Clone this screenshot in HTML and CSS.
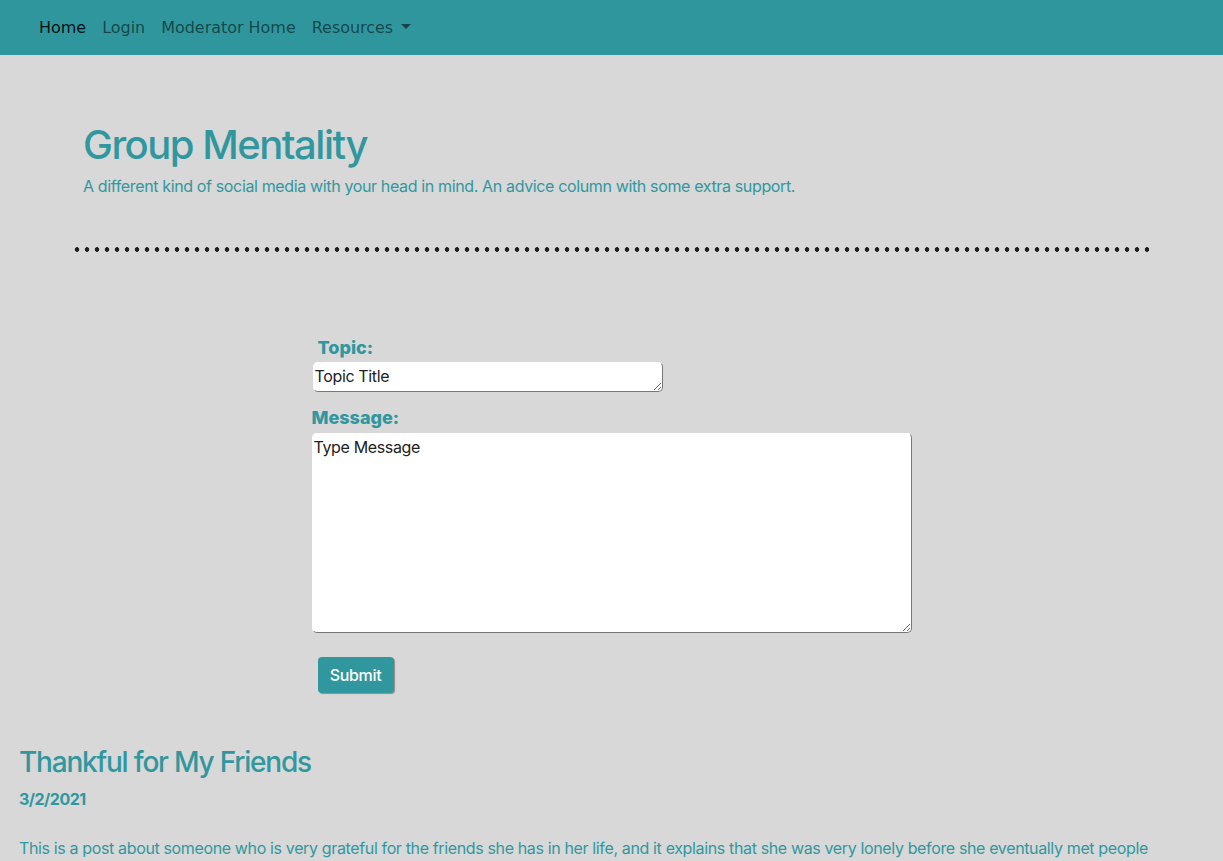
FILE: index.html
```html
<!DOCTYPE html>
<html>
<head>
<meta charset="utf-8">
<title>Group Mentality</title>
<link rel="stylesheet" href="styles.css">
</head>
<body>
<nav class="navbar">
  <a class="nav-link active" href="#">Home</a>
  <a class="nav-link" href="#">Login</a>
  <a class="nav-link" href="#">Moderator Home</a>
  <a class="nav-link dropdown" href="#">Resources <span class="caret"></span></a>
</nav>
<header class="jumbo">
  <h1 class="title">Group Mentality</h1>
  <p class="lead">A different kind of social media with your head in mind. An advice column with some extra support.</p>
</header>
<div class="dots"></div>
<form class="post-form">
  <label class="lbl lbl-topic">Topic:</label>
  <textarea class="topic">Topic Title</textarea>
  <label class="lbl lbl-msg">Message:</label>
  <textarea class="message">Type Message</textarea>
  <button type="button" class="submit">Submit</button>
</form>
<section class="post">
  <h3 class="post-title">Thankful for My Friends</h3>
  <h6 class="post-date">3/2/2021</h6>
  <p class="post-body">This is a post about someone who is very grateful for the friends she has in her life, and it explains that she was very lonely before she eventually met people</p>
</section>
</body>
</html>
```
FILE: styles.css
```css
* { box-sizing: border-box; }
html, body { margin: 0; padding: 0; }
body {
  background: #d8d8d8;
  font-family: Inter, "Liberation Sans", Arial, sans-serif;
  color: #31979e;
  font-size: 16px;
  line-height: 1.5;
  letter-spacing: -0.36px;
  overflow: hidden;
  height: 861px;
}
.navbar {
  background: #2f969d;
  height: 55px;
  display: flex;
  align-items: center;
  padding: 0 23px 0 31px;
  letter-spacing: 0;
}
.nav-link {
  font-family: "DejaVu Sans", Verdana, sans-serif;
  font-size: 16px;
  color: rgba(0, 0, 0, 0.55);
  text-decoration: none;
  padding: 8px 8px;
  line-height: 24px;
  display: flex;
  align-items: center;
  letter-spacing: -0.03px;
}
.nav-link.active { color: rgba(0, 0, 0, 0.9); }
.caret {
  display: inline-block;
  margin-left: 8px;
  width: 0; height: 0;
  border-left: 5px solid transparent;
  border-right: 5px solid transparent;
  border-top: 5px solid rgba(0, 0, 0, 0.55);
  position: relative;
  top: -1px;
}
.jumbo {
  padding: 66px 83px 0;
}
.title {
  margin: 0;
  font-size: 40px;
  font-weight: 500;
  line-height: 48px;
  letter-spacing: -1.5px;
}
.lead {
  margin: 5px 0 0;
  font-size: 16px;
  line-height: 24px;
}
.dots {
  margin: 49px 74px 0 74px;
  height: 5px;
  background-image: radial-gradient(circle, #1f1f1f 2px, transparent 2.6px);
  background-size: 10px 5px;
  background-position: -2px 0;
}
.post-form {
  width: 600px;
  margin: 85px auto 0;
  display: flex;
  flex-direction: column;
  align-items: flex-start;
}
.lbl {
  font-weight: 800;
  font-size: 18px;
  line-height: 22px;
  letter-spacing: 0;
}
.lbl-topic { margin-left: 6px; }
.topic {
  margin: 3px 0 0 1px;
  width: 350px;
  height: 30px;
}
.lbl-msg { margin-top: 15px; }
textarea {
  font-family: Inter, "Liberation Sans", Arial, sans-serif;
  font-size: 16px;
  letter-spacing: -0.36px;
  color: #222;
  background: #fff;
  border: 1px solid #fff;
  border-bottom-color: #767676;
  border-right-color: #767676;
  border-radius: 5px;
  padding: 2px 1px;
  line-height: 22px;
  resize: both;
  display: block;
}
.message {
  margin-top: 4px;
  width: 600px;
  height: 200px;
}
.submit {
  margin: 24px 0 0 6px;
  width: 76px;
  height: 36px;
  background: #31979e;
  color: #fff;
  border: none;
  border-radius: 4px;
  font-family: Inter, "Liberation Sans", Arial, sans-serif;
  font-size: 16px;
  font-weight: 500;
  letter-spacing: -0.3px;
  box-shadow: 1px 1px 1px rgba(0,0,0,0.35);
}
.post {
  padding: 0 19px;
  margin-top: 52px;
}
.post-title {
  margin: 0;
  font-size: 28px;
  font-weight: 500;
  line-height: 34px;
  letter-spacing: -1.2px;
}
.post-date {
  margin: 10px 0 0;
  font-size: 16px;
  font-weight: 650;
  line-height: 20px;
  letter-spacing: -0.5px;
}
.post-body {
  margin: 27px 0 0;
  font-size: 16px;
  line-height: 24px;
  white-space: nowrap;
}
```
